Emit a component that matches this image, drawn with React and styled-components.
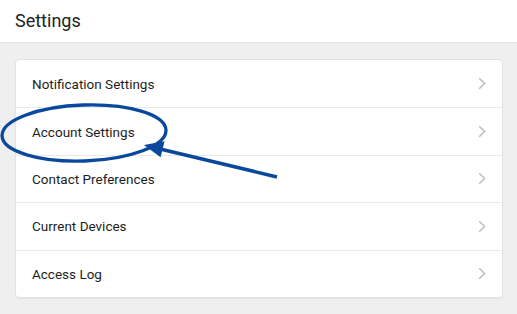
import React from 'react';
import styled, { createGlobalStyle } from 'styled-components';

const GlobalStyle = createGlobalStyle`
    html, body {
        margin: 0;
        padding: 0;
        background: #efefef;
    }
    body {
        font-family: Roboto, "Liberation Sans", sans-serif;
        color: #222;
    }
`;

const Page = styled.div`
    position: relative;
    width: 517px;
    height: 314px;
    overflow: hidden;
    background: #efefef;
`;

const Header = styled.header`
    height: 43px;
    display: flex;
    align-items: center;
    padding: 0 15px 2px;
    box-sizing: border-box;
    background: #fff;
    border-bottom: 1px solid #e3e3e3;
`;

const Title = styled.h1`
    margin: 0;
    font-size: 18px;
    font-weight: 400;
    color: #222;
`;

const Content = styled.main`
    padding: 16px 14px 0 15px;
`;

const Card = styled.ul`
    list-style: none;
    margin: 0;
    padding: 0;
    background: #fff;
    border: 1px solid #e2e2e2;
    border-radius: 4px;
    box-shadow: 0 1px 1px rgba(0, 0, 0, 0.04);
`;

const Row = styled.li`
    height: 47.4px;
    box-sizing: border-box;
    display: flex;
    align-items: center;
    justify-content: space-between;
    padding: 0 15px 0 16px;
    border-top: ${({ $first }) => ($first ? 'none' : '1.5px solid #e9e9e9')};
`;

const Label = styled.span`
    font-size: 13.5px;
    color: #1e1e1e;
`;

const Chevron = styled.svg`
    width: 10px;
    height: 13px;
    flex: none;
`;

const Overlay = styled.svg`
    position: absolute;
    left: 0;
    top: 0;
    pointer-events: none;
`;

const items = [
    'Notification Settings',
    'Account Settings',
    'Contact Preferences',
    'Current Devices',
    'Access Log',
];

const ChevronIcon = () => (
    <Chevron viewBox="0 0 10 13">
        <path d="M2.2 1.3 L7.6 6.5 L2.2 11.7" fill="none" stroke="#bdbdbd" strokeWidth="1.5" />
    </Chevron>
);

export default function App() {
    return (
        <>
            <GlobalStyle />
            <Page>
                <Header>
                    <Title>Settings</Title>
                </Header>
                <Content>
                    <Card>
                        {items.map((item, i) => (
                            <Row key={item} $first={i === 0}>
                                <Label>{item}</Label>
                                <ChevronIcon />
                            </Row>
                        ))}
                    </Card>
                </Content>
                <Overlay width="517" height="314" viewBox="0 0 517 314">
                    <ellipse
                        cx="84"
                        cy="133"
                        rx="82"
                        ry="28"
                        transform="rotate(-2 84 133)"
                        fill="none"
                        stroke="#0a489d"
                        strokeWidth="3.3"
                    />
                    <line x1="277" y1="177" x2="158" y2="148.5" stroke="#0a489d" strokeWidth="3.6" />
                    <polygon points="144,145 164.5,141.2 160.6,157.2" fill="#0a489d" />
                </Overlay>
            </Page>
        </>
    );
}
